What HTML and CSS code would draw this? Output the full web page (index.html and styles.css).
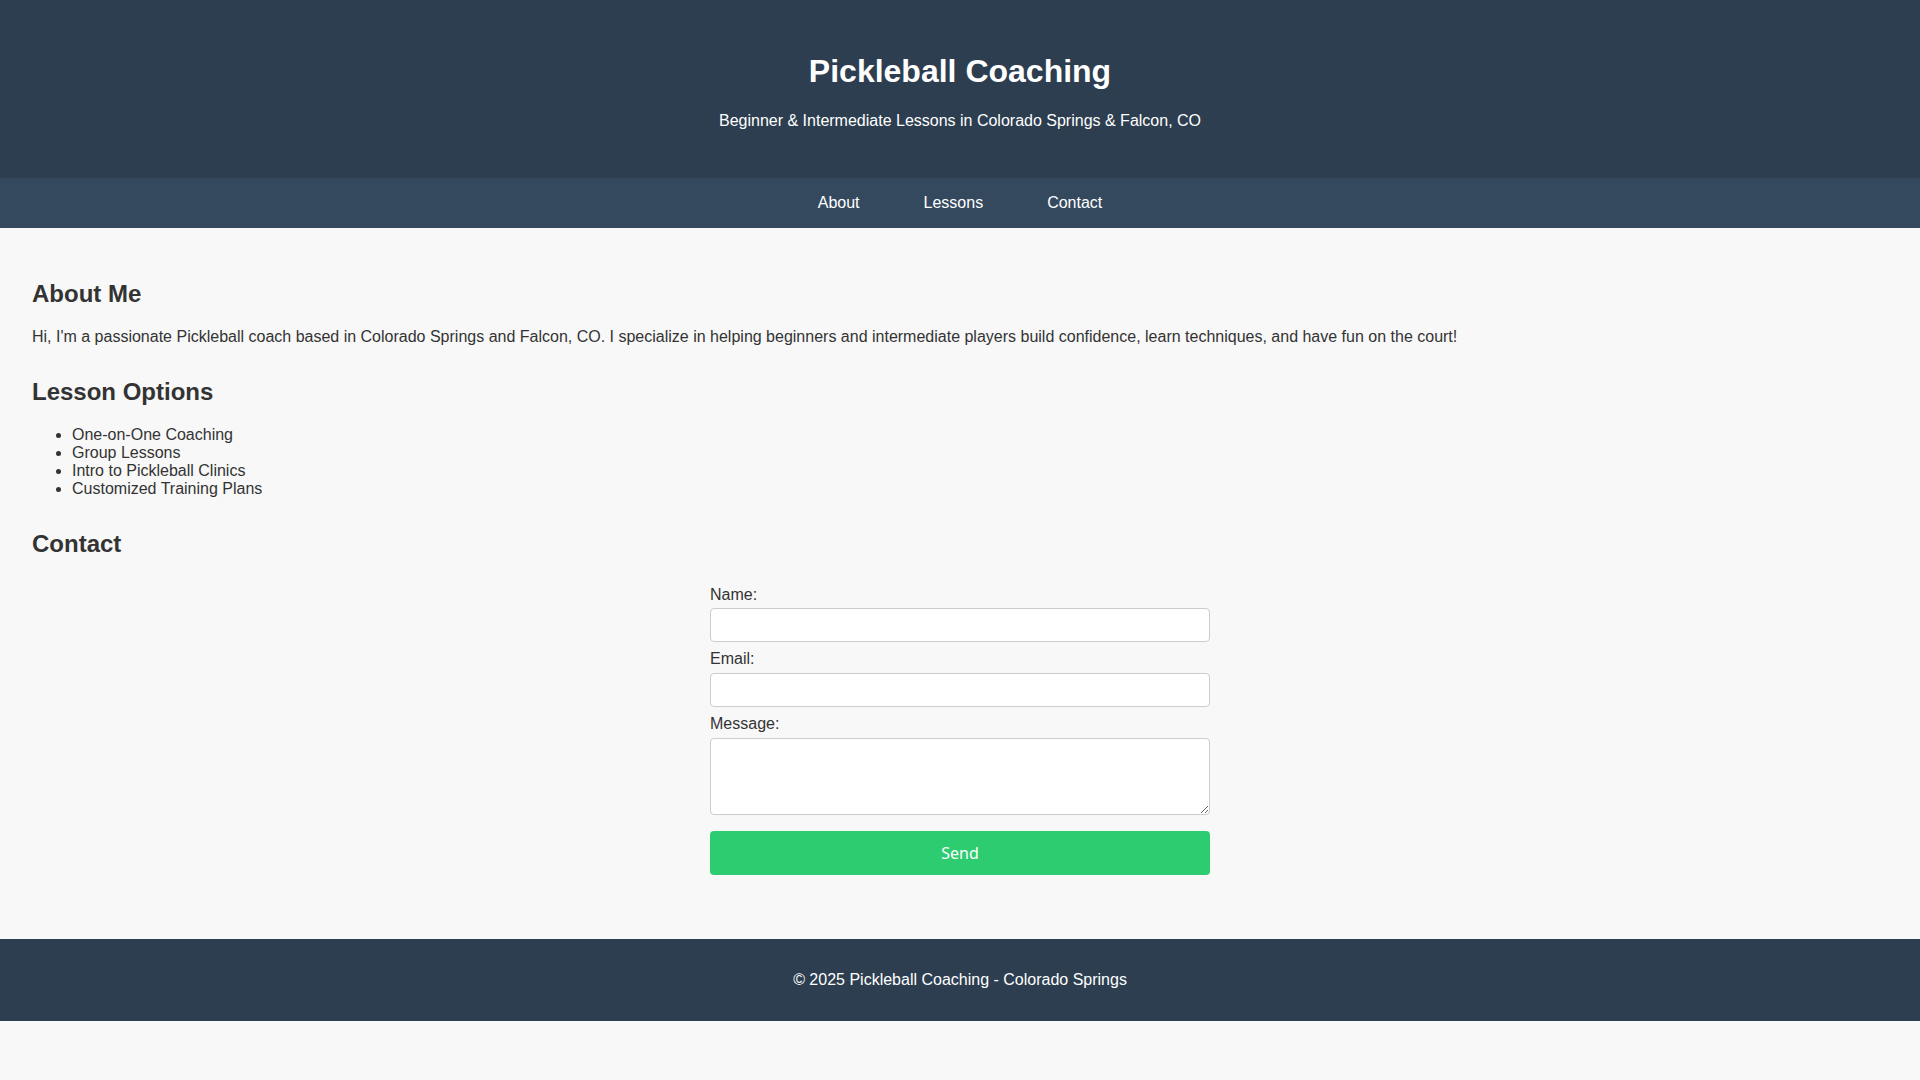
FILE: index.html
```html
<!DOCTYPE html>
<html lang="en">
<head>
<meta charset="utf-8">
<title>Pickleball Coaching</title>
<link rel="stylesheet" href="styles.css">
</head>
<body>
<header class="site-header">
  <h1 class="site-title">Pickleball Coaching</h1>
  <p class="site-tagline">Beginner &amp; Intermediate Lessons in Colorado Springs &amp; Falcon, CO</p>
</header>
<nav class="site-nav">
  <a href="#about">About</a>
  <a href="#lessons">Lessons</a>
  <a href="#contact">Contact</a>
</nav>
<main class="content">
  <section id="about" class="block">
    <h2>About Me</h2>
    <p>Hi, I'm a passionate Pickleball coach based in Colorado Springs and Falcon, CO. I specialize in helping beginners and intermediate players build confidence, learn techniques, and have fun on the court!</p>
  </section>
  <section id="lessons" class="block">
    <h2>Lesson Options</h2>
    <ul>
      <li>One-on-One Coaching</li>
      <li>Group Lessons</li>
      <li>Intro to Pickleball Clinics</li>
      <li>Customized Training Plans</li>
    </ul>
  </section>
  <section id="contact" class="block">
    <h2>Contact</h2>
    <form class="contact-form">
      <label for="name">Name:</label>
      <input type="text" id="name" name="name">
      <label for="email">Email:</label>
      <input type="email" id="email" name="email">
      <label for="message">Message:</label>
      <textarea id="message" name="message" rows="4"></textarea>
      <button type="submit">Send</button>
    </form>
  </section>
</main>
<footer class="site-footer">
  <p>&copy; 2025 Pickleball Coaching - Colorado Springs</p>
</footer>
</body>
</html>
```
FILE: styles.css
```css
body {
  margin: 0;
  font-family: "Liberation Sans", Arial, sans-serif;
  background: #f8f8f8;
  color: #333;
}

.site-header {
  background: #2c3e50;
  color: #fff;
  text-align: center;
  padding: 2rem 1rem;
}

.site-title {
  font-size: 2em;
  margin: 0.67em 0;
}

.site-tagline {
  margin: 1em 0;
}

.site-nav {
  background: #34495e;
  display: flex;
  justify-content: center;
  gap: 4rem;
  padding: 1rem 0;
}

.site-nav a {
  color: #fff;
  text-decoration: none;
}

.content {
  padding: 2rem;
}

.block {
  margin-bottom: 2rem;
}

.block h2 {
  font-size: 1.5em;
  margin: 0.83em 0;
}

.contact-form {
  display: flex;
  flex-direction: column;
  max-width: 500px;
  margin: 0 auto;
}

.contact-form label {
  margin: 0.5rem 0 0.3rem;
}

.contact-form input,
.contact-form textarea {
  box-sizing: border-box;
  width: 100%;
  padding: 8px;
  border: 1px solid #ccc;
  border-radius: 4px;
  background: #fff;
  font-size: 13.33px;
  line-height: 16px;
}

.contact-form textarea {
  height: 77px;
}

.contact-form button {
  margin-top: 1rem;
  padding: 12px;
  border: none;
  border-radius: 4px;
  background: #2ecc71;
  color: #fff;
  font-family: system-ui, sans-serif;
  font-size: 16px;
  line-height: 20px;
  cursor: pointer;
}

.site-footer {
  background: #2c3e50;
  color: #fff;
  text-align: center;
  padding: 2rem 1rem;
}

.site-footer p {
  margin: 0;
}
```
